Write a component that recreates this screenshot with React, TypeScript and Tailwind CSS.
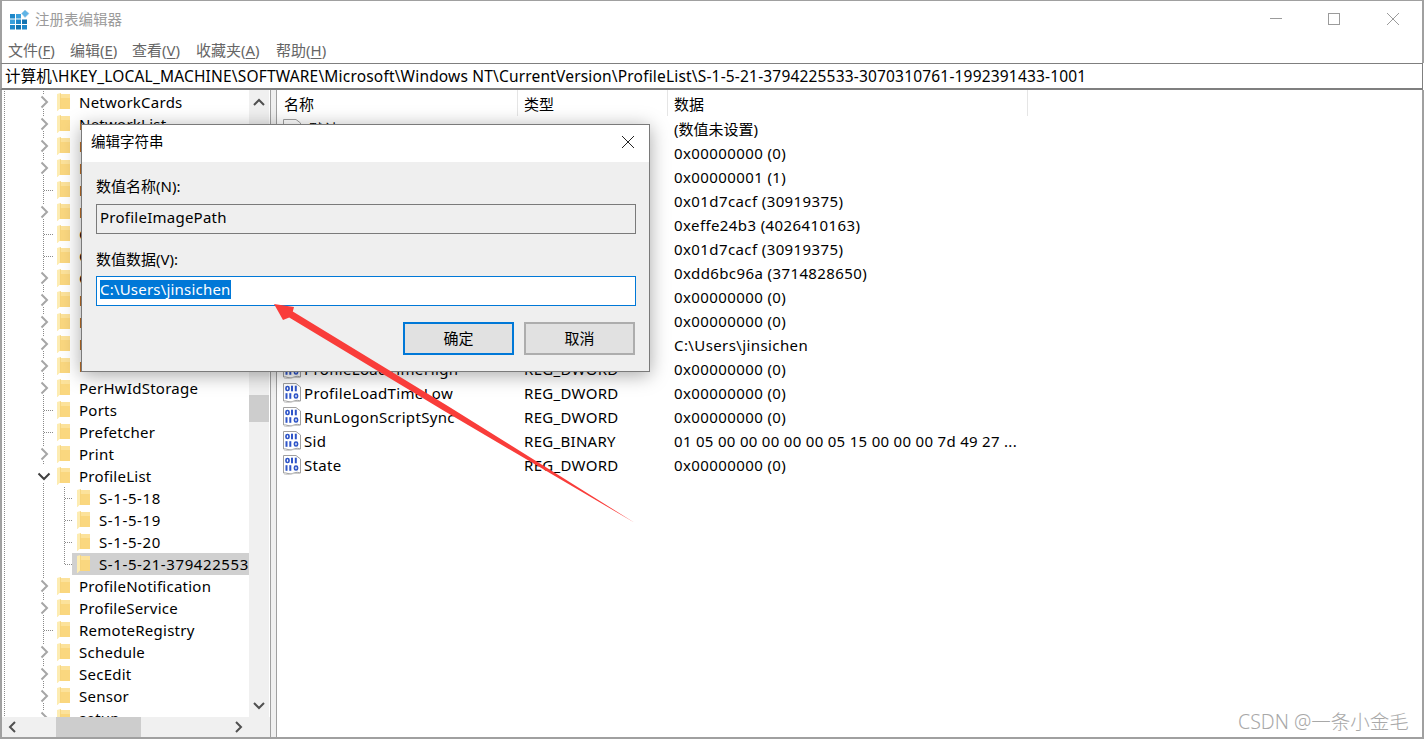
import React from "react";

const FONT = '"Noto Sans", "Noto Sans CJK SC", sans-serif';

type Kind = "c" | "d" | "o" | "k" | "l";
const tree: [string, Kind][] = [
  ["NetworkCards", "c"],
  ["NetworkList", "c"],
  ["NoImeModeImes", "c"],
  ["Notifications", "c"],
  ["NtVdm64", "d"],
  ["NetworkStore", "c"],
  ["OEM", "d"],
  ["OpenGLDrivers", "d"],
  ["Ole", "c"],
  ["PeerDist", "c"],
  ["PeerNet", "c"],
  ["Perflib", "c"],
  ["Perms", "c"],
  ["PerHwIdStorage", "c"],
  ["Ports", "d"],
  ["Prefetcher", "d"],
  ["Print", "c"],
  ["ProfileList", "o"],
  ["S-1-5-18", "k"],
  ["S-1-5-19", "k"],
  ["S-1-5-20", "k"],
  ["S-1-5-21-3794225533-3070310761", "l"],
  ["ProfileNotification", "c"],
  ["ProfileService", "c"],
  ["RemoteRegistry", "d"],
  ["Schedule", "c"],
  ["SecEdit", "c"],
  ["Sensor", "c"],
  ["setup", "c"],
];

const rows: [string, string, string][] = [
  ["(默认)", "REG_SZ", "(数值未设置)"],
  ["Flags", "REG_DWORD", "0x00000000 (0)"],
  ["FullProfile", "REG_DWORD", "0x00000001 (1)"],
  ["LocalProfileLoadTimeHigh", "REG_DWORD", "0x01d7cacf (30919375)"],
  ["LocalProfileLoadTimeLow", "REG_DWORD", "0xeffe24b3 (4026410163)"],
  ["LocalProfileUnloadTimeHigh", "REG_DWORD", "0x01d7cacf (30919375)"],
  ["LocalProfileUnloadTimeLow", "REG_DWORD", "0xdd6bc96a (3714828650)"],
  ["Migrated", "REG_DWORD", "0x00000000 (0)"],
  ["ProfileAttemptTime", "REG_DWORD", "0x00000000 (0)"],
  ["ProfileImagePath", "REG_EXPAND_SZ", "C:\\Users\\jinsichen"],
  ["ProfileLoadTimeHigh", "REG_DWORD", "0x00000000 (0)"],
  ["ProfileLoadTimeLow", "REG_DWORD", "0x00000000 (0)"],
  ["RunLogonScriptSync", "REG_DWORD", "0x00000000 (0)"],
  ["Sid", "REG_BINARY", "01 05 00 00 00 00 00 05 15 00 00 00 7d 49 27 ..."],
  ["State", "REG_DWORD", "0x00000000 (0)"],
];

const dot = { stroke: "#8a8a8a", strokeWidth: 1, strokeDasharray: "1 1", fill: "none" };

function Gutter({ kind }: { kind: Kind }) {
  const child = kind === "k" || kind === "l";
  return (
    <svg width="53" height="22" className="shrink-0 block" viewBox="0 0 53 22">
      <line x1="2.5" y1="0" x2="2.5" y2="22" {...dot} />
      {kind === "c" && (
        <>
          <line x1="41.5" y1="0" x2="41.5" y2="4" {...dot} />
          <line x1="41.5" y1="18" x2="41.5" y2="22" {...dot} />
          <path d="M39.5 5.5 L45 11 L39.5 16.5" stroke="#a6a6a6" strokeWidth="2" fill="none" />
        </>
      )}
      {kind === "o" && (
        <>
          <line x1="41.5" y1="18" x2="41.5" y2="22" {...dot} />
          <path d="M36.5 8.5 L42 14 L47.5 8.5" stroke="#404040" strokeWidth="2" fill="none" />
        </>
      )}
      {kind === "d" && (
        <>
          <line x1="41.5" y1="0" x2="41.5" y2="22" {...dot} />
          <line x1="42" y1="11.5" x2="52" y2="11.5" {...dot} />
        </>
      )}
      {child && <line x1="41.5" y1="0" x2="41.5" y2="22" {...dot} />}
    </svg>
  );
}

function ChildGutter({ last }: { last: boolean }) {
  return (
    <svg width="17" height="22" className="shrink-0 block" viewBox="0 0 17 22">
      <line x1="9.5" y1="0" x2="9.5" y2={last ? 12 : 22} {...dot} />
      <line x1="10" y1="11.5" x2="17" y2="11.5" {...dot} />
    </svg>
  );
}

function Folder() {
  return (
    <svg width="13" height="18" viewBox="0 0 13 18" className="shrink-0 block">
      <rect x="2" y="1" width="11" height="15" fill="#fad77f" />
      <rect x="3" y="1" width="10" height="4" fill="#fce29b" />
      <path d="M0 1 L3.5 0 L3.5 15 L0.5 18 L0 18 Z" fill="#fdecb2" />
      <path d="M3.5 0 L4 0 L4 15 L3.5 15.5 Z" fill="#f2c760" />
    </svg>
  );
}

function Bin() {
  return (
    <svg width="20" height="20" viewBox="0 0 20 20" className="shrink-0 block">
      <path d="M1.5 0.5 H14 L18.5 4 V18 Q15 16.5 12 18 T6 18.5 T1.5 18 Z" fill="#fff" stroke="#a0a0a0" />
      <path d="M2 19 Q6 20 9 19 T18 18.5" fill="none" stroke="#c8c8c8" />
      <g fill="none" stroke="#2f55c8" strokeWidth="1.7">
        <rect x="4" y="3.5" width="3" height="4" rx="1.4" />
        <rect x="12.5" y="11" width="3" height="4" rx="1.4" />
      </g>
      <g fill="#2f55c8">
        <rect x="9" y="2.7" width="2" height="5.6" />
        <rect x="12.8" y="2.7" width="2" height="5.6" />
        <rect x="3.5" y="10.2" width="2" height="5.6" />
        <rect x="7.3" y="10.2" width="2" height="5.6" />
      </g>
    </svg>
  );
}

function Sz() {
  return (
    <svg width="20" height="20" viewBox="0 0 20 20" className="shrink-0 block">
      <path d="M1.5 0.5 H14 L18.5 4 V18 Q15 16.5 12 18 T6 18.5 T1.5 18 Z" fill="#fff" stroke="#a0a0a0" />
      <rect x="9" y="5" width="2" height="3" fill="#d04040" />
    </svg>
  );
}

function RegLogo() {
  return (
    <svg width="20" height="20" viewBox="0 0 20 20" className="block shrink-0">
      <g fill="#1e87c9">
        <rect x="0" y="4" width="5" height="4.5" />
        <rect x="6" y="4" width="5" height="4.5" fill="#3aa0dc" />
        <rect x="0" y="9.5" width="5" height="4.5" fill="#3aa0dc" />
        <rect x="6" y="9.5" width="5" height="4.5" />
        <rect x="12" y="9.5" width="5" height="4.5" fill="#1273b0" />
        <rect x="0" y="15" width="5" height="4.5" />
        <rect x="6" y="15" width="5" height="4.5" fill="#1273b0" />
        <rect x="12" y="15" width="5" height="4.5" fill="#1e87c9" />
      </g>
      <path d="M15 0 L19 3.5 L15 7.5 L11.5 3.5 Z" fill="#5fb4e6" stroke="#9fc9e4" strokeWidth="0.5" />
    </svg>
  );
}

function U({ c }: { c: string }) {
  return <span className="underline underline-offset-2">{c}</span>;
}

function ScrollChevron({ d }: { d: string }) {
  return (
    <svg width="20" height="20" viewBox="0 0 20 20" className="block shrink-0">
      <path d={d} stroke="#505050" strokeWidth="2" fill="none" />
    </svg>
  );
}

export default function App() {
  return (
    <div
      className="relative w-[1424px] h-[739px] overflow-hidden bg-white text-black flex flex-col border-t border-[#a0a0a0]"
      style={{ fontFamily: FONT }}
    >
      {/* Title bar */}
      <div className="h-[39px] shrink-0 flex items-center pb-[3px] pl-[8px] border-l-2 border-r-2 border-[#a0a0a0]">
        <div className="mr-[5px] mt-[1px]">
          <RegLogo />
        </div>
        <span className="text-[14.5px] text-[#9b9b9b] leading-none">注册表编辑器</span>
        <div className="ml-auto flex items-center">
          <svg width="14" height="14" viewBox="0 0 14 14" className="block mr-[44px]">
            <line x1="1" y1="6.5" x2="13" y2="6.5" stroke="#9b9b9b" />
          </svg>
          <svg width="14" height="14" viewBox="0 0 14 14" className="block mr-[45px]">
            <rect x="1.5" y="1.5" width="11" height="11" fill="none" stroke="#9b9b9b" />
          </svg>
          <svg width="14" height="14" viewBox="0 0 14 14" className="block mr-[22px]">
            <path d="M1 1 L13 13 M13 1 L1 13" fill="none" stroke="#9b9b9b" />
          </svg>
        </div>
      </div>

      {/* Menu */}
      <div className="h-[23px] shrink-0 flex items-center pb-[2px] border-l-2 border-r-2 border-[#a0a0a0] pl-[6px] text-[15px] text-[#666] leading-none">
        <span className="w-[62px]">文件(<U c="F" />)</span>
        <span className="w-[62px]">编辑(<U c="E" />)</span>
        <span className="w-[64px]">查看(<U c="V" />)</span>
        <span className="w-[80px]">收藏夹(<U c="A" />)</span>
        <span>帮助(<U c="H" />)</span>
      </div>

      {/* Address bar */}
      <div className="h-[27px] shrink-0 flex items-center pl-[3px] pt-[2px] mr-[1px] border-l-2 border-[#a0a0a0] border-t border-t-[#7f7f7f] border-b-2 border-b-[#7f7f7f] border-r border-r-[#7f7f7f] text-[15.5px] tracking-[0.18px] leading-none whitespace-nowrap">
        计算机\HKEY_LOCAL_MACHINE\SOFTWARE\Microsoft\Windows NT\CurrentVersion\ProfileList\S-1-5-21-3794225533-3070310761-1992391433-1001
      </div>

      {/* Body */}
      <div className="flex-1 min-h-0 flex border-l-2 border-r-2 border-b-2 border-[#a0a0a0]">
        {/* Tree */}
        <div className="w-[269px] shrink-0 flex flex-col border-r border-[#a0a0a0]">
          <div className="flex-1 min-h-0 flex">
            <div className="w-[247px] shrink-0 overflow-hidden pt-[1px]">
              {tree.map(([name, kind]) => {
                const child = kind === "k" || kind === "l";
                return (
                  <div
                    key={name}
                    className={
                      child
                        ? "h-[22px] flex items-center whitespace-nowrap text-[15px] tracking-[0.6px] leading-none"
                        : "h-[22px] flex items-center whitespace-nowrap text-[15px] tracking-[0.25px] leading-none"
                    }
                  >
                    <Gutter kind={kind} />
                    {child && <ChildGutter last={kind === "l"} />}
                    <div
                      className={
                        kind === "l"
                          ? "flex-1 min-w-0 overflow-hidden h-[22px] flex items-center bg-[#d0d0d0] pl-[5px]"
                          : child
                            ? "flex items-center pl-[5px]"
                            : "flex items-center pl-[2px]"
                      }
                    >
                      <Folder />
                      <span className="ml-[9px]">{kind === "l" ? "S-1-5-21-379422553" : name}</span>
                    </div>
                  </div>
                );
              })}
            </div>
            <div className="w-[20px] shrink-0 bg-[#f0f0f0] flex flex-col">
              <ScrollChevron d="M5 15 L10 10 L15 15" />
              <div className="h-[285px] shrink-0" />
              <div className="h-[27px] shrink-0 bg-[#cdcdcd]" />
              <div className="flex-1" />
              <ScrollChevron d="M5 6 L10 11 L15 6" />
            </div>
          </div>
          <div className="h-[20px] shrink-0 bg-[#f0f0f0] flex">
            <ScrollChevron d="M13 5 L8 10 L13 15" />
            <div className="w-[34px] shrink-0" />
            <div className="w-[85px] shrink-0 bg-[#cdcdcd]" />
            <div className="flex-1" />
            <ScrollChevron d="M6 5 L11 10 L6 15" />
            <div className="w-[20px] shrink-0" />
          </div>
        </div>

        {/* Splitter */}
        <div className="w-[6px] shrink-0 bg-[#f0f0f0] border-r border-[#a0a0a0]" />

        {/* List */}
        <div className="flex-1 min-w-0 flex flex-col">
          <div className="h-[27px] shrink-0 flex text-[15px] leading-none">
            <div className="w-[241px] h-[26px] flex items-center pl-[7px] pt-[2px] border-r border-[#e5e5e5]">名称</div>
            <div className="w-[150px] h-[26px] flex items-center pl-[6px] pt-[2px] border-r border-[#e5e5e5]">类型</div>
            <div className="w-[360px] h-[26px] flex items-center pl-[6px] pt-[2px] border-r border-[#e5e5e5]">数据</div>
          </div>
          {rows.map(([n, t, v], i) => (
            <div key={n} className="h-[24px] shrink-0 flex items-center text-[15px] leading-none whitespace-nowrap">
              <div className="w-[241px] flex items-center pl-[5px] gap-[2px] shrink-0 tracking-[0.33px]">
                {i === 0 || i === 9 ? <Sz /> : <Bin />}
                <span>{n}</span>
              </div>
              <div className="w-[150px] pl-[6px] shrink-0 tracking-[0.3px]">{t}</div>
              <div className={i === 0 ? "pl-[6px]" : i === 13 ? "pl-[6px] tracking-[0.3px]" : "pl-[6px] tracking-[0.4px]"}>{v}</div>
            </div>
          ))}
        </div>
      </div>

      {/* Dialog */}
      <div className="absolute left-[81px] top-[123px] w-[569px] h-[248px] bg-[#efefef] border border-[#7a7a7a] shadow-[0_3px_18px_rgba(0,0,0,0.35)] flex flex-col">
        <div className="h-[37px] shrink-0 bg-white flex items-center pl-[9px] pr-[14px] pb-[4px] justify-between text-[14.5px] leading-none">
          <span>编辑字符串</span>
          <svg width="14" height="14" viewBox="0 0 14 14" className="block">
            <path d="M1 1 L13 13 M13 1 L1 13" fill="none" stroke="#222" />
          </svg>
        </div>
        <div className="flex-1 pl-[14px] pr-[13px] text-[15px] leading-none">
          <div className="h-[42px] pt-[17px]">数值名称(N):</div>
          <div className="h-[30px] border border-[#7a7a7a] flex items-center pl-[3px] pb-[3px] tracking-[0.25px]">
            ProfileImagePath
          </div>
          <div className="h-[42px] pt-[18px]">数值数据(V):</div>
          <div className="h-[30px] bg-white border border-[#0078d7] flex items-center pl-[3px] pb-[4px] tracking-[0.2px]">
            <span className="bg-[#0078d7] text-white h-[19px] flex items-center">C:\Users\jinsichen</span>
          </div>
          <div className="mt-[16px] flex justify-end gap-[10px] pr-[1px]">
            <div className="w-[111px] h-[33px] bg-[#e1e1e1] border-2 border-[#0078d7] flex items-center justify-center">确定</div>
            <div className="w-[111px] h-[33px] bg-[#e1e1e1] border-2 border-[#adadad] flex items-center justify-center">取消</div>
          </div>
        </div>
      </div>

      {/* Annotation arrow */}
      <svg className="absolute left-0 top-0 pointer-events-none" width="1424" height="739" viewBox="0 0 1424 739">
        <polygon
          points="274,303 294,306 292.8,310.6 446.6,404.2 548.4,467.7 635,522 546.8,470.3 443.4,409.4 289.2,316.6 283,319"
          fill="#f93d3a"
        />
      </svg>

      {/* Watermark */}
      <div className="absolute left-[1238px] top-[709px] text-[19.5px] leading-[24px] font-light text-[#a8a8a8] whitespace-nowrap">
        CSDN @一条小金毛
      </div>
    </div>
  );
}
